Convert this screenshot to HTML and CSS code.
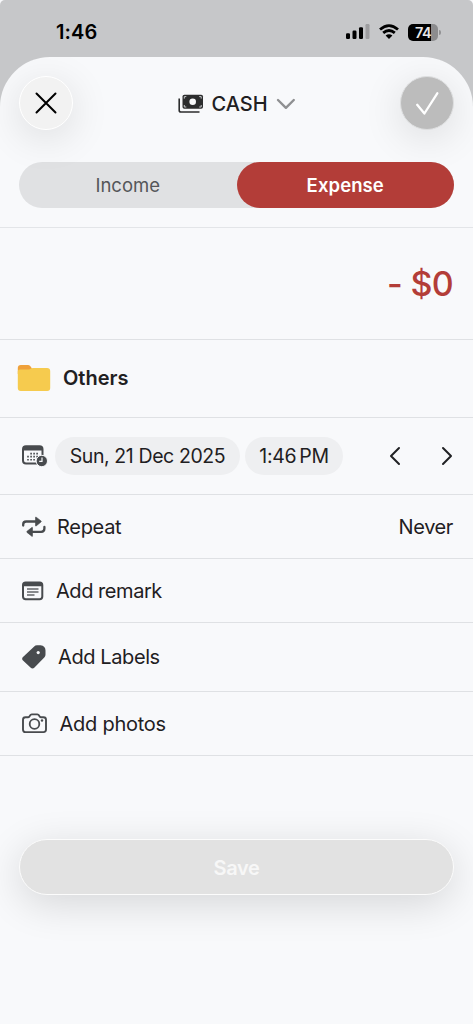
FILE: index.html
```html
<!DOCTYPE html>
<html lang="en">
<head>
<meta charset="utf-8">
<meta name="viewport" content="width=device-width, initial-scale=1">
<title>Add transaction</title>
<link rel="stylesheet" href="styles.css">
</head>
<body>
<div class="screen">
  <div class="status">
    <span class="time">1:46</span>
    <div class="indicators">
      <svg class="signal" width="24" height="16" viewBox="0 0 24 16"><rect x="0" y="9.3" width="4" height="5.7" rx="1.2"/><rect x="6.5" y="6.5" width="4" height="8.5" rx="1.2"/><rect x="13" y="3.3" width="4" height="11.7" rx="1.2"/><rect x="19.5" y="0" width="4" height="15" rx="1.2" fill="#9d9d9f"/></svg>
      <svg class="wifi" width="20" height="16" viewBox="0 0 20 16"><g fill="none" stroke="#000" stroke-width="2.8"><path d="M1 5.5Q10-2.300 19 5.500"/><path d="M4.200 8.900Q10 4 15.800 8.900"/></g><path d="M6.600 11.500Q10 8.800 13.400 11.500L10 15Z"/></svg>
      <div class="battery"><span>74</span></div><i class="battery-tip"></i>
    </div>
  </div>
  <main class="sheet">
    <header class="header">
      <button class="round close" aria-label="Close"><svg width="22" height="22" viewBox="0 0 22 22"><path d="M1.500 1.500 20.500 20.500M20.500 1.500 1.500 20.500" fill="none" stroke="#000" stroke-width="2" stroke-linecap="round"/></svg></button>
      <div class="account">
        <svg width="26" height="20" viewBox="0 0 26 20"><path d="M1.200 4.500V16.200Q1.200 18 3 18H21.500" fill="none" stroke="#2c2d2e" stroke-width="1.600"/><rect x="4.500" y="0.800" width="20.500" height="14" rx="1.800" fill="#2c2d2e"/><circle cx="14.700" cy="7.800" r="3.300" fill="#f8f9fb"/><path d="M6.300 4.600V2.600H8.300M21.200 2.600H23.200V4.600M6.300 11V13H8.300M21.200 13H23.200V11" fill="none" stroke="#c9cacc" stroke-width="1"/></svg>
        <span class="account-name">CASH</span>
        <svg class="chevron" width="20" height="14" viewBox="0 0 20 14"><path d="M2 3 9.900 10.800 17.800 3" fill="none" stroke="#8f9092" stroke-width="2.400" stroke-linecap="round" stroke-linejoin="round"/></svg>
      </div>
      <button class="round confirm" aria-label="Confirm"><svg width="24" height="24" viewBox="0 0 24 24"><path d="M2.200 13.800 9.400 22.500 22.300 2.300" fill="none" stroke="#fff" stroke-width="2.300" stroke-linecap="round" stroke-linejoin="round"/></svg></button>
    </header>
    <div class="segments"><div class="segment"><span class="income">Income</span></div><div class="segment selected"><span class="expense">Expense</span></div></div>
    <section class="row amount"><span class="amount-value">- $0</span></section>
    <section class="row category">
      <svg width="34" height="28" viewBox="0 0 34 28"><path d="M.800 10V4Q.800 1 3.800 1H11Q12.300 1 13.200 2L15 4.500V10Z" fill="#efa13a"/><path d="M.800 7.500Q.800 5.500 3 5.500H11.500Q13 5.500 14 4.400Q14.600 3.900 16 3.900H30Q33.200 3.900 33.200 7V24Q33.200 27 30.200 27H3.800Q.800 27 .800 24Z" fill="#f6cb4e"/></svg>
      <span class="others">Others</span>
    </section>
    <section class="row date">
      <svg width="26" height="22" viewBox="0 0 26 22"><rect x="1" y="1.200" width="19.500" height="17.400" rx="3" fill="none" stroke="#484b4e" stroke-width="2"/><path d="M1 5V3.500Q1 1 4 1H17.500Q20.500 1 20.500 3.500V5.500H1Z" fill="#484b4e"/><g fill="#484b4e"><path d="M8.300 7.800h1.600v1.600H8.300zM11.300 7.800h1.600v1.600h-1.600zM14.300 7.800h1.600v1.600h-1.600zM5.200 10.800h1.600v1.600H5.200zM8.300 10.800h1.600v1.600H8.300zM11.300 10.800h1.600v1.600h-1.600zM14.300 10.800h1.600v1.600h-1.600zM5.200 14h1.600v1.600H5.200zM8.300 14h1.600v1.600H8.300zM11.300 14h1.600v1.600h-1.600z"/></g><circle cx="19.800" cy="16" r="5.700" fill="#484b4e" stroke="#f8f9fb" stroke-width="1"/><path d="M20 12.600V16.300H17.200" fill="none" stroke="#f8f9fb" stroke-width="1.200"/></svg>
      <div class="chip day"><span class="day-text">Sun, 21 Dec 2025</span></div>
      <div class="chip hour"><span class="hour-text">1:46&#8201;PM</span></div>
      <div class="arrows"><svg width="12" height="20" viewBox="0 0 12 20"><path d="M10 2 2 10 10 18" class="arrow"/></svg><svg width="12" height="20" viewBox="0 0 12 20"><path d="M2 2 10 10 2 18" class="arrow"/></svg></div>
    </section>
    <section class="row repeat">
      <svg width="24" height="22" viewBox="0 0 24 22"><path d="M1.200 9.500V8.500Q1.200 5.500 4.200 5.500H14.500M22.400 11V12.500Q22.400 15.800 19.200 15.800H9" fill="none" stroke="#484b4e" stroke-width="2.300" stroke-linecap="round"/><path d="M13.500 1.500Q13.500.700 14.200 1.200L19 4.900Q19.600 5.500 19 6L14.200 9.900Q13.500 10.400 13.500 9.500ZM10.500 11.900Q10.500 11 9.800 11.500L5 15.300Q4.400 15.900 5 16.400L9.800 20.200Q10.500 20.700 10.500 19.900Z" fill="#484b4e" stroke="#484b4e" stroke-width=".6"/></svg>
      <span class="label repeat-text">Repeat</span><span class="never">Never</span>
    </section>
    <section class="row remark">
      <svg width="22" height="20" viewBox="0 0 22 20"><rect x="1" y="1.400" width="19.300" height="16.900" rx="2.700" fill="none" stroke="#484b4e" stroke-width="2"/><path d="M1 5.200V3.500Q1 1 3.500 1H17.800Q20.300 1 20.300 3.500V5.200Z" fill="#484b4e"/><path d="M5 8H16.500M5 11H16.500M5 14H12.500" stroke="#63666a" stroke-width="1.500"/></svg>
      <span class="label remark-text">Add remark</span>
    </section>
    <section class="row labels">
      <svg width="24" height="24" viewBox="0 0 24 24"><path d="M12.200 1.400Q13.300.300 15 .300H18.500Q21 .300 22.300 1.900Q23.500 3.200 23.500 5.500V9.500Q23.500 11 22.500 12.200L12.500 22.600Q10.500 24.500 8.500 22.600L1 15.500Q-.700 13.500 1 12Z" fill="#484b4e"/><circle cx="16.200" cy="7.600" r="1.600" fill="#f8f9fb"/></svg>
      <span class="label labels-text">Add Labels</span>
    </section>
    <section class="row photos">
      <svg width="26" height="21" viewBox="0 0 26 21"><path d="M3.500 4.200H6.200Q7.200 4.200 7.700 3.200L8.100 2.400Q8.600 1.400 9.800 1.400H15.300Q16.500 1.400 17 2.400L17.400 3.200Q17.900 4.200 18.900 4.200H21.500Q24 4.200 24 6.700V16.600Q24 19.100 21.500 19.100H3.500Q1 19.100 1 16.600V6.700Q1 4.200 3.500 4.200Z" fill="none" stroke="#484b4e" stroke-width="1.900"/><circle cx="12.500" cy="11" r="4.800" fill="none" stroke="#484b4e" stroke-width="1.800"/><circle cx="20" cy="7.500" r="1.200" fill="#484b4e"/></svg>
      <span class="label photos-text">Add photos</span>
    </section>
    <button class="save"><span>Save</span></button>
  </main>
</div>
</body>
</html>
```
FILE: styles.css
```css
* { box-sizing: border-box; }
body { margin: 0; background: #f8f9fb; font-family: Inter, "Liberation Sans", sans-serif; color: #1f2022; }
button { border: 0; padding: 0; font: inherit; }
svg { display: block; flex: none; }
span { white-space: nowrap; }
.screen { width: 473px; height: 1024px; background: #c6c7c9; overflow: hidden; border-radius: 5px 5px 0 0; }
.status { height: 57px; padding: 7px 32px 0 56px; display: flex; justify-content: space-between; align-items: center; }
.time { font-size: 20px; font-weight: 600; letter-spacing: .1px; color: #000; }
.indicators { display: flex; align-items: center; }
.wifi { margin-left: 9px; }
.battery { width: 30px; height: 17px; margin-left: 9px; border-radius: 5px; background: linear-gradient(90deg, #000 0 23px, #8c8c8e 23px); color: #e8e8e9; font-size: 14.5px; font-weight: 600; line-height: 17px; text-align: center; letter-spacing: -.7px; }
.battery-tip { width: 2px; height: 5px; margin-left: 1px; border-radius: 0 2px 2px 0; background: #929294; }
.sheet { height: 967px; background: #f8f9fb; border-radius: 50px 50px 0 0; overflow: hidden; }
.header { height: 104.5px; padding: 19px 19px 0; display: flex; justify-content: space-between; align-items: flex-start; }
.round { width: 54px; height: 54px; border-radius: 50%; display: flex; align-items: center; justify-content: center; }
.close { background: #f2f2f2; border: 1.5px solid #fff; box-shadow: 0 8px 40px rgba(0,0,0,.12); }
.confirm { background: #bcbcbc; border: 1px solid #dedfe0; box-shadow: 0 8px 40px rgba(0,0,0,.12); }
.account { display: flex; align-items: center; height: 54px; padding-top: 1px; padding-left: 1px; }
.account-name { margin-left: 7px; font-size: 20px; font-weight: 500; }
.chevron { margin-left: 8px; }
.segments { height: 46px; margin: 0 19px 19.5px; display: flex; background: #e0e1e3; border-radius: 23px; }
.segment { flex: 1; display: flex; align-items: center; justify-content: center; font-size: 18.5px; color: #545659; }
.selected { border-radius: 23px; background: #b33d38; color: #fff; font-weight: 600; }
.expense { letter-spacing: .1px; }
.row { display: flex; align-items: center; border-bottom: 1px solid #dfe1e4; height: 64px; font-size: 20px; padding-left: 21.5px; padding-right: 20px; }
.amount { height: 113px; border-top: 1px solid #e3e5e8; justify-content: flex-end; color: #b33d38; }
.amount-value { font-size: 34px; font-weight: 500; letter-spacing: -.7px; }
.category { height: 78px; padding-left: 17px; padding-bottom: 2px; }
.others { margin-left: 12px; font-weight: 600; }
.date { height: 77px; font-size: 19.5px; }
.chip { height: 38px; border-radius: 19px; background: #eeeff1; display: flex; align-items: center; justify-content: center; }
.day { width: 185px; margin-left: 7.5px; letter-spacing: -.4px; }
.hour { width: 98px; margin-left: 5px; letter-spacing: -.35px; }
.arrows { margin-left: auto; display: flex; gap: 40px; }
.arrow { fill: none; stroke: #202123; stroke-width: 2; stroke-linecap: round; stroke-linejoin: round; }
.repeat-text { margin-left: 11.5px; letter-spacing: -.3px; }
.never { margin-left: auto; letter-spacing: -.4px; }
.remark-text { margin-left: 12.5px; letter-spacing: -.45px; }
.labels { height: 69px; }
.labels-text { margin-left: 12.5px; letter-spacing: -.4px; }
.photos-text { margin-left: 12px; letter-spacing: -.25px; }
.save { display: flex; align-items: center; justify-content: center; width: 435px; height: 56px; margin: 83px 19px 0; border: 1.5px solid #fcfcfc; border-radius: 28px; background: #e2e2e2; color: #f7f7f7; font-size: 20px; font-weight: 600; letter-spacing: -.3px; padding-top: 1px; box-shadow: 0 9px 40px rgba(0,0,0,.14); }
```
